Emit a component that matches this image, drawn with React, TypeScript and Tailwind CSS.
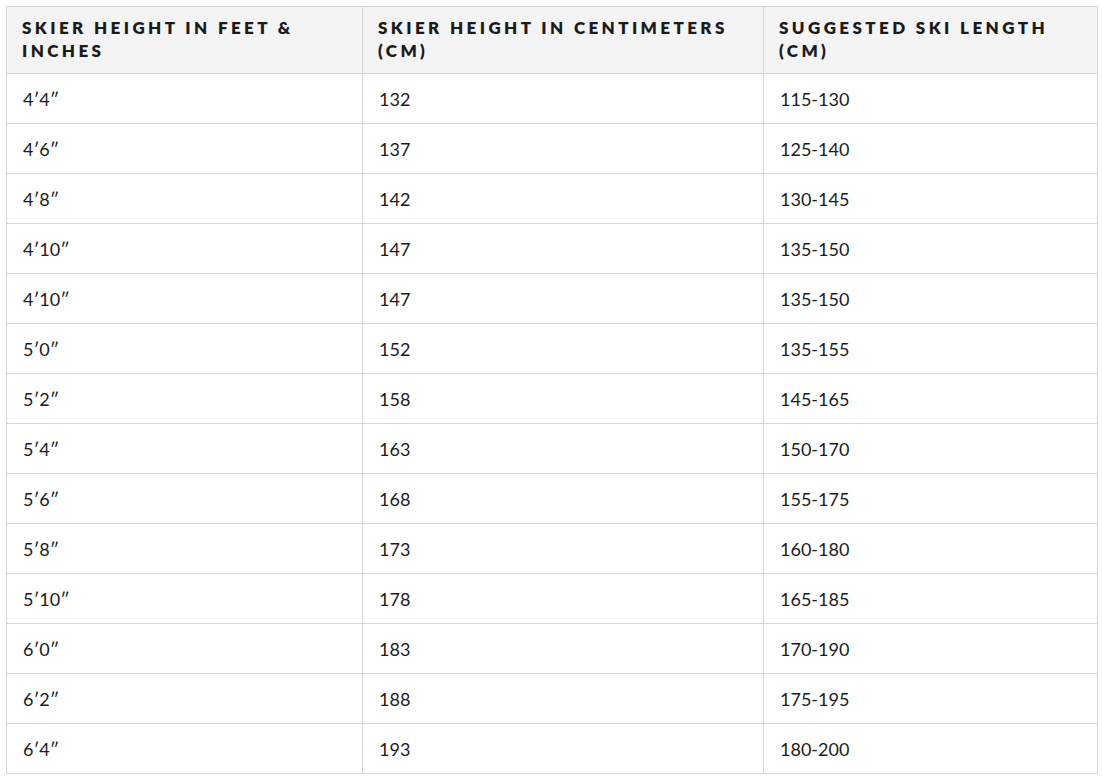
const rows: [string, string, string][] = [
  ["4′4″", "132", "115-130"],
  ["4′6″", "137", "125-140"],
  ["4′8″", "142", "130-145"],
  ["4′10″", "147", "135-150"],
  ["4′10″", "147", "135-150"],
  ["5′0″", "152", "135-155"],
  ["5′2″", "158", "145-165"],
  ["5′4″", "163", "150-170"],
  ["5′6″", "168", "155-175"],
  ["5′8″", "173", "160-180"],
  ["5′10″", "178", "165-185"],
  ["6′0″", "183", "170-190"],
  ["6′2″", "188", "175-195"],
  ["6′4″", "193", "180-200"],
];

const headers = [
  "Skier Height in Feet & Inches",
  "Skier Height in Centimeters (CM)",
  "Suggested Ski Length (CM)",
];

export default function App() {
  return (
    <div className="min-h-screen bg-white pt-[6px] pl-[6px] font-['Lato','Noto_Sans',sans-serif] text-[#1b1b1b]">
      <table className="w-[1091px] table-fixed border-collapse">
        <colgroup>
          <col className="w-[356px]" />
          <col className="w-[401px]" />
          <col className="w-[334px]" />
        </colgroup>
        <thead>
          <tr className="h-[67px] bg-[#f4f4f4]">
            {headers.map((h) => (
              <th
                key={h}
                className="border border-[#d6d6d6] pl-[15px] pr-6 pt-[9px] text-left align-top text-[17px] font-extrabold uppercase leading-[23px] tracking-[0.2em]"
              >
                {h}
              </th>
            ))}
          </tr>
        </thead>
        <tbody>
          {rows.map((r, i) => (
            <tr key={i} className="h-[50px]">
              {r.map((c, j) => (
                <td
                  key={j}
                  className="border border-[#d6d6d6] pl-[16px] text-left align-middle text-[18px] leading-none"
                >
                  {c}
                </td>
              ))}
            </tr>
          ))}
        </tbody>
      </table>
    </div>
  );
}
